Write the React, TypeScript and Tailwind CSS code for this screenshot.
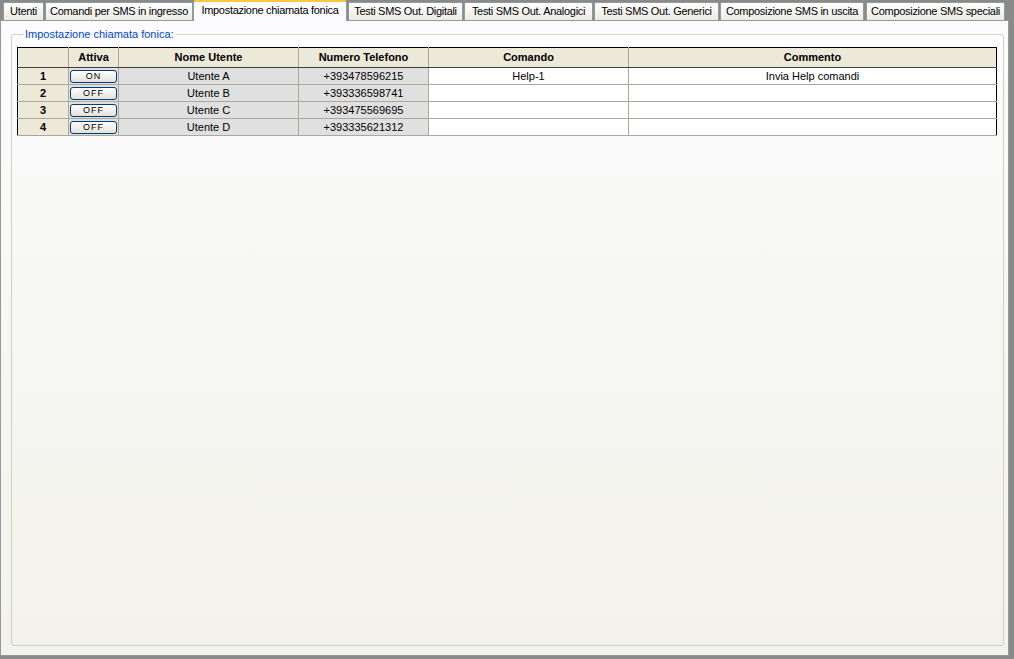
const TABS = [
  { label: "Utenti", w: "w-[41px]", gap: "ml-[3px]" },
  { label: "Comandi per SMS in ingresso", w: "w-[148px]", gap: "ml-[1px]" },
  { label: "Impostazione chiamata fonica", w: "w-[154px]", gap: "ml-0", active: true },
  { label: "Testi SMS Out. Digitali", w: "w-[115px]", gap: "ml-[1px]" },
  { label: "Testi SMS Out. Analogici", w: "w-[129px]", gap: "ml-[1px]" },
  { label: "Testi SMS Out. Generici", w: "w-[125px]", gap: "ml-[1px]" },
  { label: "Composizione SMS in uscita", w: "w-[144px]", gap: "ml-[1px]" },
  { label: "Composizione SMS speciali", w: "w-[139px]", gap: "ml-[2px]" },
];

const ROWS = [
  { n: 1, on: true, name: "Utente A", phone: "+393478596215", cmd: "Help-1", note: "Invia Help comandi" },
  { n: 2, on: false, name: "Utente B", phone: "+393336598741", cmd: "", note: "" },
  { n: 3, on: false, name: "Utente C", phone: "+393475569695", cmd: "", note: "" },
  { n: 4, on: false, name: "Utente D", phone: "+393335621312", cmd: "", note: "" },
];

function Tab({ label, w, gap, active }: { label: string; w: string; gap: string; active?: boolean }) {
  if (active) {
    return (
      <div
        className={`relative z-10 -mb-px flex h-[21px] ${w} ${gap} items-start justify-center whitespace-nowrap rounded-t-[3px] border border-b-0 border-[#919b9c] border-t-2 border-t-[#ffc83c] bg-[#fcfcfe] text-[11px] leading-[16px] tracking-[-0.3px]`}
      >
        {label}
      </div>
    );
  }
  return (
    <div
      className={`flex h-[18px] ${w} ${gap} items-start justify-center overflow-hidden whitespace-nowrap rounded-t-[2px] border border-b-0 border-[#919b9c] bg-gradient-to-b from-white to-[#ecebe5] pt-[1px] text-[11px] leading-[15px] tracking-[-0.3px]`}
    >
      {label}
    </div>
  );
}

function Toggle({ on }: { on: boolean }) {
  return (
    <div className="mx-auto flex h-[13px] w-[47px] items-center justify-center rounded-[3px] border border-[#003c74] bg-gradient-to-b from-white to-[#e3e1d9] text-[9px] leading-none tracking-[1px] text-black">
      {on ? "ON" : "OFF"}
    </div>
  );
}

export default function App() {
  return (
    <div className="flex h-[659px] w-[1014px] flex-col bg-[#8a8a8a] font-['Liberation_Sans',Arial,sans-serif] text-black">
      <div className="flex h-[20px] items-end">
        {TABS.map((t) => (
          <Tab key={t.label} {...t} />
        ))}
      </div>
      <div className="mb-[3px] mr-[5px] flex flex-1 flex-col border border-[#919b9c] bg-gradient-to-b from-[#fcfcfe] via-[#f6f6f3] to-[#f3f2ec] px-[10px] pb-[9px] pt-[7px]">
        <fieldset className="mr-[-6px] flex-1 rounded-[3px] border border-[#d0d0bf] px-[5px] pt-[6px]">
          <legend className="ml-[6px] px-[2px] text-[11px] leading-[13px] text-[#0046d5]">
            Impostazione chiamata fonica:
          </legend>
          <table className="w-[980px] table-fixed border-collapse border border-black text-[11px]">
            <colgroup>
              <col className="w-[51px]" />
              <col className="w-[50px]" />
              <col className="w-[180px]" />
              <col className="w-[130px]" />
              <col className="w-[200px]" />
              <col />
            </colgroup>
            <thead>
              <tr className="h-[20px] bg-[#ece9d8] font-bold">
                <th className="border-b border-r border-b-[#404040] border-r-[#aca899]" />
                <th className="border-b border-r border-b-[#404040] border-r-[#aca899]">Attiva</th>
                <th className="border-b border-r border-b-[#404040] border-r-[#aca899]">Nome Utente</th>
                <th className="border-b border-r border-b-[#404040] border-r-[#aca899]">Numero Telefono</th>
                <th className="border-b border-r border-b-[#404040] border-r-[#aca899]">Comando</th>
                <th className="border-b border-b-[#404040]">Commento</th>
              </tr>
            </thead>
            <tbody>
              {ROWS.map((r) => (
                <tr key={r.n} className="h-[17px] text-center">
                  <td className="border border-l-0 border-[#aca899] bg-[#ece9d8] font-bold leading-[15px]">{r.n}</td>
                  <td className="border border-[#aca899] bg-[#e0e0e0] p-0">
                    <Toggle on={r.on} />
                  </td>
                  <td className="border border-[#aca899] bg-[#e0e0e0] leading-[15px]">{r.name}</td>
                  <td className="border border-[#aca899] bg-[#e0e0e0] leading-[15px]">{r.phone}</td>
                  <td className="border border-[#aca899] bg-white leading-[15px]">{r.cmd}</td>
                  <td className="border border-r-0 border-[#aca899] bg-white leading-[15px]">{r.note}</td>
                </tr>
              ))}
            </tbody>
          </table>
        </fieldset>
      </div>
    </div>
  );
}
